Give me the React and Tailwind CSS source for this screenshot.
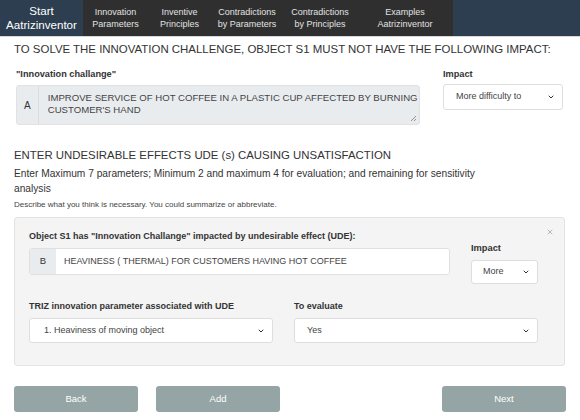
import { ChevronDown, X } from 'lucide-react';

const tabs = [
  ['Innovation', 'Parameters', 'w-[65px]'],
  ['Inventive', 'Principles', 'w-[63px]'],
  ['Contradictions', 'by Parameters', 'w-[72px]'],
  ['Contradictions', 'by Principles', 'w-[74px]'],
  ['Examples', 'Aatrizinventor', 'w-[96px]'],
];

function Select({ value, className = '' }) {
  return (
    <div className={`flex items-center justify-between bg-white border border-[#dedede] rounded-[3px] pr-[7px] text-[9px] text-[#444] ${className}`}>
      <span>{value}</span>
      <ChevronDown className="w-[8px] h-[8px] text-[#333]" strokeWidth={3} />
    </div>
  );
}

export default function App() {
  return (
    <div className="w-[580px] h-[420px] overflow-hidden bg-white text-[#333]" style={{ fontFamily: '"Liberation Sans", Arial, sans-serif' }}>
      <nav className="flex h-[37px] bg-[#2c3e50] border-b border-[#d8d8d8]">
        <div className="w-[83px] flex flex-col items-center justify-center text-white text-[11.6px] leading-[14px]">
          <span>Start</span>
          <span>Aatrizinventor</span>
        </div>
        <div className="flex bg-[#2f2f2f]">
          {tabs.map(([a, b, w], i) => (
            <div key={i} className={`${w} flex flex-col items-center justify-center text-[#e2e2e2] text-[9px] leading-[12px]`}>
              <span>{a}</span>
              <span>{b}</span>
            </div>
          ))}
        </div>
      </nav>

      <div className="px-[14px]">
        <h1 className="text-[11.45px] leading-[16px] mt-[4px] whitespace-nowrap">TO SOLVE THE INNOVATION CHALLENGE, OBJECT S1 MUST NOT HAVE THE FOLLOWING IMPACT:</h1>

        <div className="flex mt-[11px] pl-[2px]">
          <div className="w-[404px]">
            <div className="text-[9.2px] font-bold leading-[12px]">"Innovation challange"</div>
            <div className="flex mt-[5px] h-[40px] bg-[#e9ecef] rounded-[3px] border border-[#e2e2e2] relative">
              <div className="w-[27px] flex items-center justify-center text-[10px] border-r border-[#dcdcdc]">A</div>
              <div className="pl-[9px] pt-[6px] text-[9.6px] leading-[12px] text-[#444]">IMPROVE SERVICE OF HOT COFFEE IN A PLASTIC CUP AFFECTED BY BURNING CUSTOMER'S HAND</div>
              <svg className="absolute right-[3px] bottom-[3px]" width="6" height="6" viewBox="0 0 6 6">
                <path d="M6 1 L1 6 M6 4 L4 6" stroke="#777" strokeWidth="0.8" />
              </svg>
            </div>
          </div>
          <div className="ml-[23px]">
            <div className="text-[9.2px] font-bold leading-[12px]">Impact</div>
            <Select value="More difficulty to" className="mt-[4px] w-[120px] h-[26px] pl-[12px]" />
          </div>
        </div>

        <h2 className="text-[11.4px] leading-[16px] mt-[22px] whitespace-nowrap">ENTER UNDESIRABLE EFFECTS UDE (s) CAUSING UNSATISFACTION</h2>
        <p className="text-[10.2px] leading-[15px] mt-[3px] w-[470px]">Enter Maximum 7 parameters; Minimum 2 and maximum 4 for evaluation; and remaining for sensitivity analysis</p>
        <p className="text-[8px] leading-[11px] mt-[3px] text-[#444]">Describe what you think is necessary. You could summarize or abbreviate.</p>

        <div className="mt-[7px] w-[551px] h-[149px] bg-[#f4f4f4] border border-[#e3e3e3] rounded-[3px] px-[14px] pt-[12px] relative">
          <X className="absolute right-[10px] top-[10px] w-[8px] h-[8px] text-[#aaa]" strokeWidth={2.5} />
          <div className="flex">
            <div className="w-[421px]">
              <div className="text-[9px] font-bold leading-[12px]">Object S1 has "Innovation Challange" impacted by undesirable effect (UDE):</div>
              <div className="flex mt-[6px] h-[27px] rounded-[3px] border border-[#e0e0e0] overflow-hidden">
                <div className="w-[26px] bg-[#e9ecef] flex items-center justify-center text-[9.5px]">B</div>
                <div className="flex-1 bg-white flex items-center pl-[8px] text-[9px] text-[#444]">HEAVINESS ( THERMAL) FOR CUSTOMERS HAVING HOT COFFEE</div>
              </div>
            </div>
            <div className="ml-[21px] pt-[12px]">
              <div className="text-[9.3px] font-bold leading-[12px]">Impact</div>
              <Select value="More" className="mt-[6px] w-[67px] h-[24px] pl-[11px]" />
            </div>
          </div>

          <div className="flex gap-[21px] mt-[16px]">
            <div className="w-[244px]">
              <div className="text-[9px] font-bold leading-[12px]">TRIZ innovation parameter associated with UDE</div>
              <Select value="1. Heaviness of moving object" className="mt-[6px] h-[25px] pl-[14px]" />
            </div>
            <div className="w-[244px]">
              <div className="text-[9px] font-bold leading-[12px]">To evaluate</div>
              <Select value="Yes" className="mt-[6px] h-[25px] pl-[12px]" />
            </div>
          </div>
        </div>

        <div className="flex mt-[20px]">
          <button className="w-[124px] h-[26px] bg-[#95a5a6] text-white text-[9.5px] rounded-[3px]">Back</button>
          <button className="ml-[18px] w-[124px] h-[26px] bg-[#95a5a6] text-white text-[9.5px] rounded-[3px]">Add</button>
          <button className="ml-auto w-[124px] h-[26px] bg-[#95a5a6] text-white text-[9.5px] rounded-[3px]">Next</button>
        </div>
      </div>
    </div>
  );
}
